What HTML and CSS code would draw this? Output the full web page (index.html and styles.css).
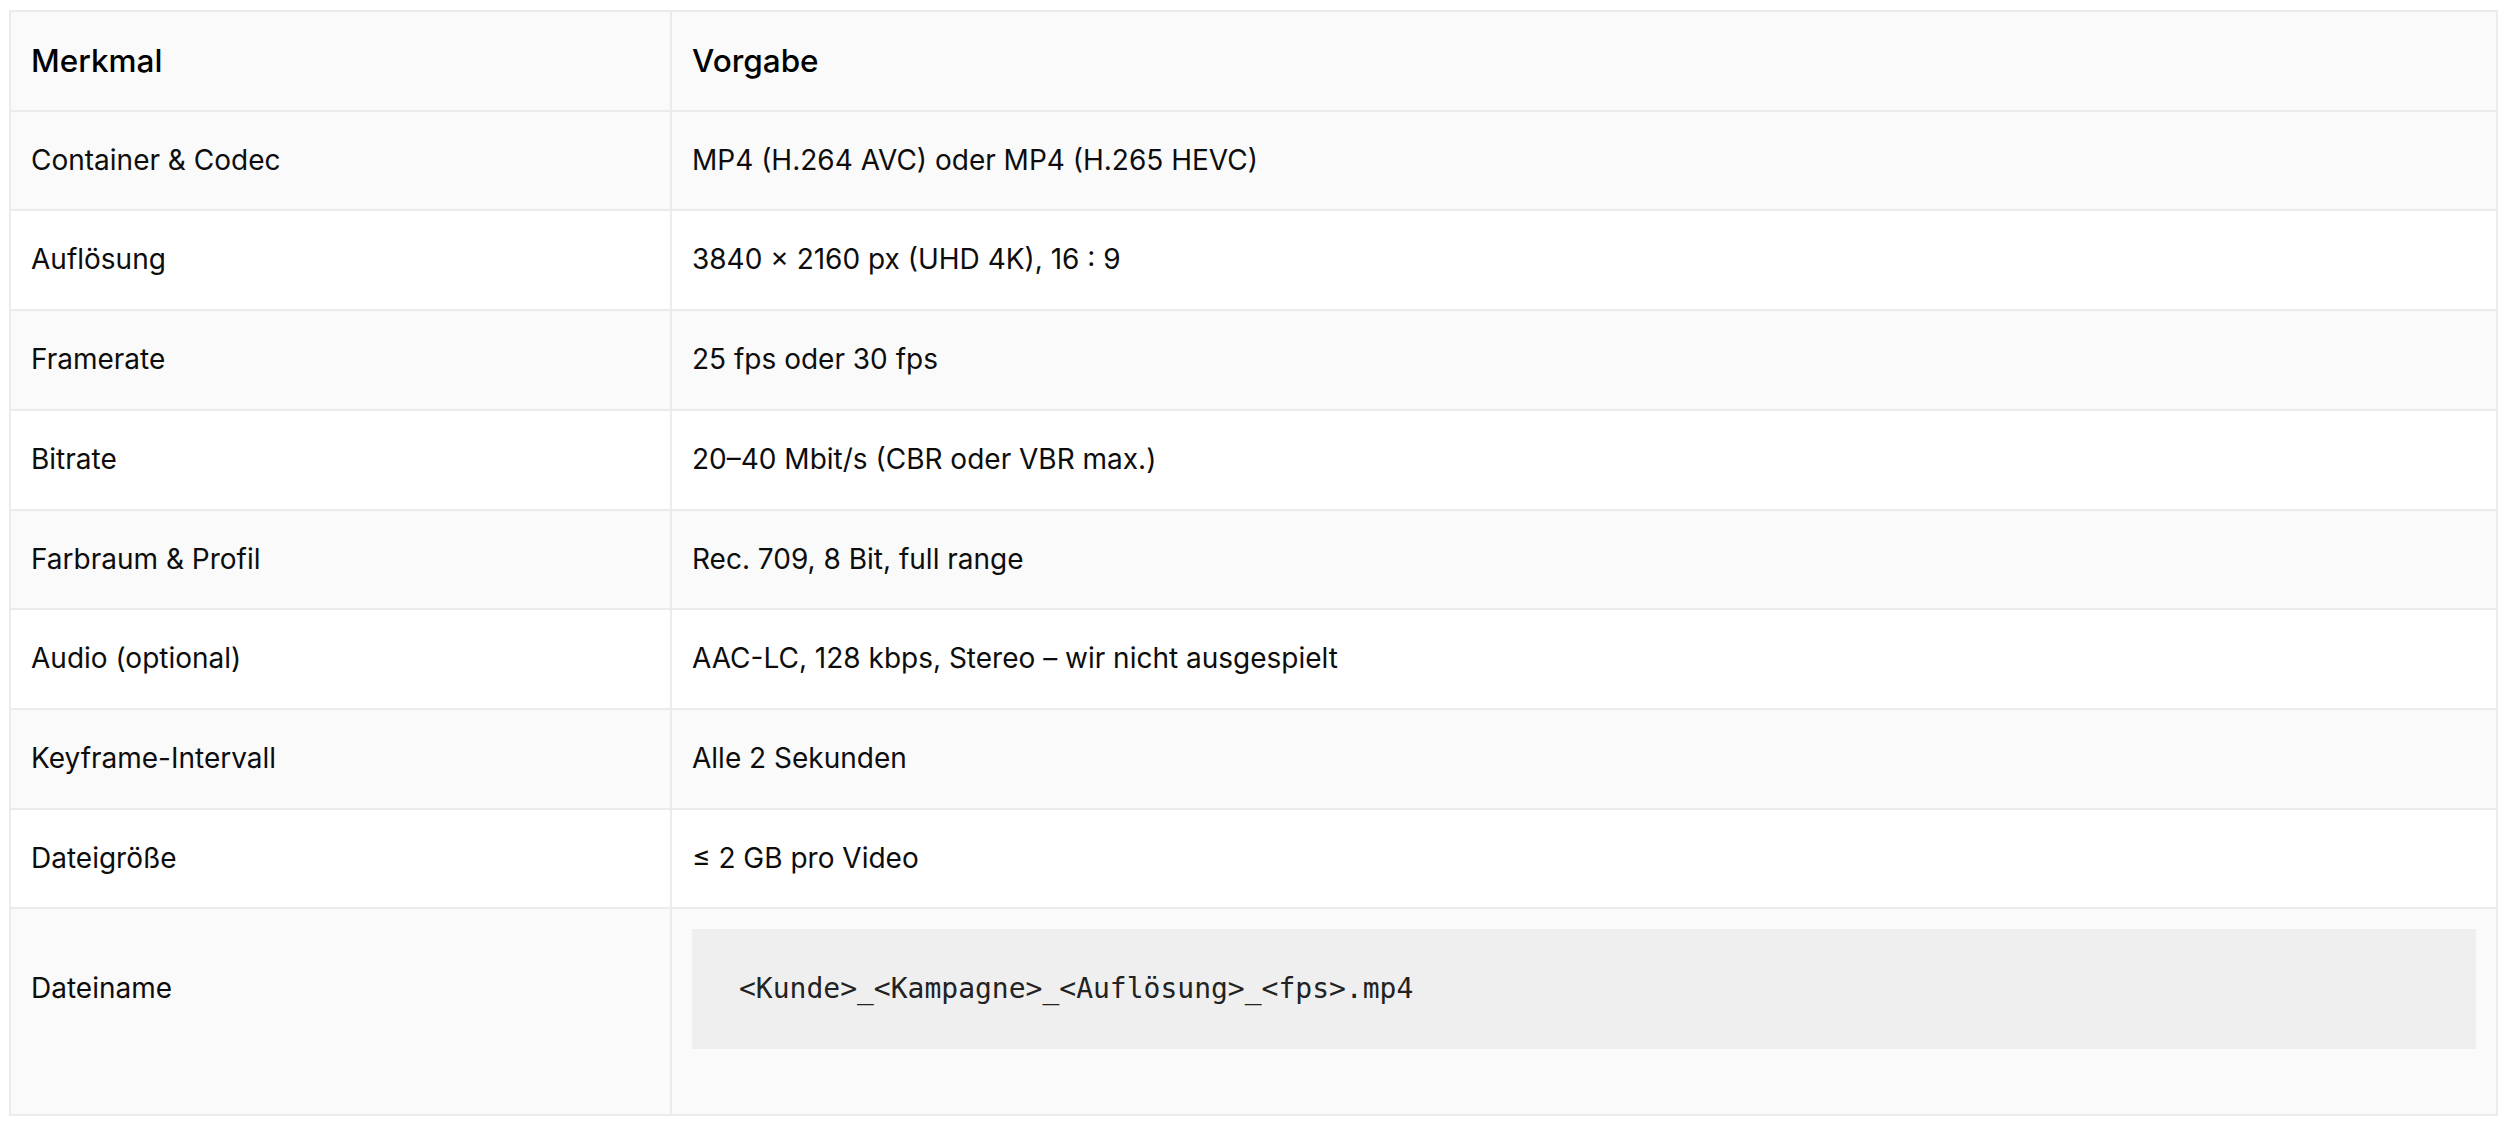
FILE: index.html
```html
<!DOCTYPE html>
<html lang="de">
<head>
<meta charset="utf-8">
<title>Video-Vorgaben</title>
<link rel="stylesheet" href="styles.css">
</head>
<body>
<div class="wrap">
<table class="spec">
  <colgroup>
    <col class="c1">
    <col class="c2">
  </colgroup>
  <thead>
    <tr><th>Merkmal</th><th>Vorgabe</th></tr>
  </thead>
  <tbody>
    <tr><td>Container &amp; Codec</td><td>MP4 (H.264 AVC) oder MP4 (H.265 HEVC)</td></tr>
    <tr><td>Auflösung</td><td>3840 × 2160 px (UHD 4K), 16 : 9</td></tr>
    <tr><td>Framerate</td><td>25 fps oder 30 fps</td></tr>
    <tr><td>Bitrate</td><td>20–40 Mbit/s (CBR oder VBR max.)</td></tr>
    <tr><td>Farbraum &amp; Profil</td><td>Rec. 709, 8 Bit, full range</td></tr>
    <tr><td>Audio (optional)</td><td>AAC-LC, 128 kbps, Stereo – wir nicht ausgespielt</td></tr>
    <tr><td>Keyframe-Intervall</td><td>Alle 2 Sekunden</td></tr>
    <tr><td>Dateigröße</td><td>≤ 2 GB pro Video</td></tr>
    <tr><td>Dateiname</td><td><pre class="code"><code>&lt;Kunde&gt;_&lt;Kampagne&gt;_&lt;Auflösung&gt;_&lt;fps&gt;.mp4</code></pre></td></tr>
  </tbody>
</table>
</div>
</body>
</html>
```
FILE: styles.css
```css
html, body {
  margin: 0;
  padding: 0;
  background: #ffffff;
}
.wrap {
  padding: 10px 10px 0 9px;
}
.spec {
  width: 2489px;
  border-collapse: separate;
  border-spacing: 0;
  table-layout: fixed;
  font-family: Inter, "Noto Sans", sans-serif;
  font-size: 28px;
  color: #0d0d0d;
  border-top: 2px solid #ebebeb;
  border-left: 2px solid #ebebeb;
}
.c1 { width: 661px; }
.spec th, .spec td {
  border-right: 2px solid #ebebeb;
  border-bottom: 2px solid #ebebeb;
  padding: 20px 20px;
  line-height: 57.7px;
  text-align: left;
  vertical-align: baseline;
}
.spec th {
  font-size: 31.5px;
  font-weight: 500;
  color: #000;
  background: #fafafa;
}
.spec tbody tr:nth-child(odd) td { background: #fafafa; }
.spec tbody tr:nth-child(even) td { background: #ffffff; }
.code {
  margin: 0 0 45px 0;
  padding: 31px 47px;
  background: #efefef;
  font-family: "DejaVu Sans Mono", monospace;
  font-size: 28px;
  line-height: 57.7px;
  color: #222;
}
.code code { font-family: inherit; }
```
